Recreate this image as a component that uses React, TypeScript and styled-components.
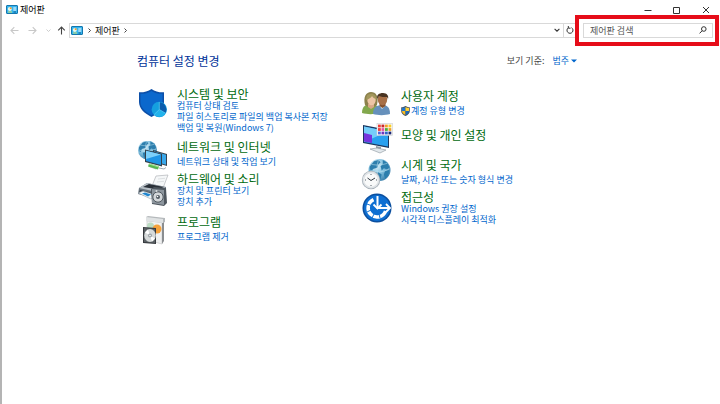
import React from "react";
import styled, { createGlobalStyle } from "styled-components";

const GlobalStyle = createGlobalStyle`
  *, *::before, *::after { box-sizing: border-box; }
  body {
    margin: 0;
    background: #fff;
    font-family: "Noto Sans CJK KR", "Noto Sans", sans-serif;
    font-size: 9px;
    color: #222;
  }
  button, input { font: inherit; color: inherit; }
  a { text-decoration: none; }
  a:hover { text-decoration: underline; }
`;

const Window = styled.div`
  min-height: 100vh;
  padding-top: 1px;
  border-left: 2px solid #b4b4b4;
  background: #fff;
`;

const TitleBar = styled.header`
  display: flex;
  align-items: center;
  height: 17px;
  padding-left: 4px;
`;

const WindowTitle = styled.h1`
  flex: 1;
  margin: 0 0 0 2px;
  font-size: 9px;
  font-weight: 400;
  line-height: 16px;
  color: #000;
`;

const IconButton = styled.button<{ $width: number; $color?: string }>`
  display: flex;
  align-items: center;
  justify-content: center;
  flex: none;
  width: ${(p) => p.$width}px;
  height: 14px;
  padding: 0;
  border: 0;
  background: none;
  color: ${(p) => p.$color ?? "#333"};
`;

const NavBar = styled.nav`
  display: flex;
  align-items: center;
  height: 24px;
  padding-left: 4px;
`;

const AddressBar = styled.div`
  display: flex;
  align-items: center;
  flex: 1;
  height: 15px;
  padding-left: 1px;
  border: 1px solid #d9d9d9;
  border-right: 0;
`;

const Crumb = styled.a`
  line-height: 13px;
  color: #111;
`;

const Spacer = styled.div`
  flex: 1;
`;

const Divider = styled.span`
  width: 1px;
  height: 13px;
  background: #d9d9d9;
`;

const SearchHighlight = styled.div`
  flex: none;
  width: 144px;
  margin: -8px 1px -8px 0;
  padding: 4px 2px 4px 4px;
  border: 4px solid #e60d19;
`;

const SearchBox = styled.form`
  display: flex;
  align-items: center;
  height: 15px;
  border: 1px solid #d9d9d9;
`;

const SearchInput = styled.input`
  flex: 1;
  min-width: 0;
  height: 13px;
  padding: 0 0 0 6px;
  border: 0;
  outline: 0;
  background: none;
  &::placeholder { color: #555; opacity: 1; }
`;

const Main = styled.main`
  padding: 11px 143px 0 135px;
`;

const Heading = styled.div`
  display: flex;
  align-items: center;
  justify-content: space-between;
  height: 16px;
`;

const PageTitle = styled.h2`
  margin: 0;
  font-size: 12px;
  font-weight: 400;
  line-height: 16px;
  color: #003399;
`;

const ViewBy = styled.div`
  display: flex;
  align-items: center;
  gap: 8px;
  line-height: 14px;
  color: #444;
`;

const ViewButton = styled.button`
  display: flex;
  align-items: center;
  gap: 2px;
  padding: 0;
  border: 0;
  background: none;
  color: #0066cc;
  line-height: 14px;
`;

const Columns = styled.div`
  display: grid;
  grid-template-columns: 224px 1fr;
  padding-top: 19px;
`;

const Column = styled.div<{ $rows: string; $top?: number }>`
  display: grid;
  grid-template-rows: ${(p) => p.$rows};
  align-content: start;
  padding-top: ${(p) => p.$top ?? 0}px;
`;

const CategoryRow = styled.section`
  display: grid;
  grid-template-columns: 32px 1fr;
  column-gap: 8px;
  align-items: start;
`;

const CategoryText = styled.div<{ $top: number }>`
  padding-top: ${(p) => p.$top}px;
`;

const CategoryTitle = styled.h3<{ $loose?: boolean }>`
  margin: 0 0 ${(p) => (p.$loose ? 3 : 0)}px;
  font-size: 12px;
  font-weight: 400;
  line-height: 12px;
  white-space: nowrap;
  a { color: #006a0f; }
`;

const TaskList = styled.ul`
  margin: 0;
  padding: 0;
  list-style: none;
`;

const Task = styled.li`
  height: 11px;
  line-height: 11px;
  white-space: nowrap;
`;

const TaskLink = styled.a`
  display: inline-flex;
  align-items: center;
  gap: 1px;
  color: #0066cc;
`;

const Glyph = styled.svg`
  display: block;
  flex: none;
`;

const PanelIcon = () => (
  <Glyph width="12" height="9" viewBox="0 0 12 9" aria-hidden="true">
    <rect x=".5" y=".5" width="11" height="8" rx=".5" fill="#36b4ee" stroke="#1477ae" />
    <circle cx="3.8" cy="4" r="2" fill="#eaf7e8" />
    <path d="M3.8 4V2a2 2 0 0 1 2 2z" fill="#ef9f35" />
    <path d="M7.3 3h3M7.3 5h3" stroke="#fff" />
    <path d="M2 7h4" stroke="#d4e36c" />
    <path d="M7.5 7h2.5" stroke="#0b5b90" />
  </Glyph>
);

const Arrow = ({ turn }: { turn: number }) => (
  <Glyph width="9" height="9" viewBox="0 0 9 9" fill="none" stroke="currentColor" aria-hidden="true">
    <path d="M8.5 4.5H1M4.3 1.2 1 4.5l3.3 3.3" transform={`rotate(${turn} 4.5 4.5)`} strokeWidth="1.1" />
  </Glyph>
);

const Chevron = ({ turn = 0, size = 6 }: { turn?: number; size?: number }) => (
  <Glyph width={size} height={size} viewBox="0 0 6 6" fill="none" stroke="currentColor" aria-hidden="true">
    <path d="M.6 1.8 3 4.2l2.4-2.4" strokeWidth="1.1" transform={`rotate(${turn} 3 3)`} />
  </Glyph>
);

const SecurityIcon = () => (
  <Glyph width="32" height="32" viewBox="0 0 32 32" aria-hidden="true">
    <path d="M14.5 1C11 3.8 6 4.5 2 4.3V14c0 6.5 5.5 11.5 12.5 15C21.5 25.5 27 20.5 27 14V4.3C22.5 4.5 18 3.8 14.5 1z" fill="#0c4fa8" />
    <path d="M14.5 3C11 5.4 7 5.9 3.5 5.8V14c0 5.5 4.8 10 11 13.3C20.7 24 25.5 19.5 25.5 14V5.8C22 5.9 17.5 5.4 14.5 3z" fill="#0b68cd" />
    <circle cx="22.3" cy="21.5" r="7.7" fill="#159fdf" />
    <path d="M22.3 21.5V14.2A7.4 7.4 0 0 1 28.5 25z" fill="#0b5cad" />
    <path d="m22.3 21.5-5.3 5.2a7.5 7.5 0 0 0 11.5-1.2z" fill="#22b3ec" />
    <path d="M22.3 14v7.5l-5.3 5.2M22.3 21.5l6.2 3.7" stroke="#62cff5" strokeWidth=".7" fill="none" />
  </Glyph>
);

const Globe = ({ cx, cy, r, id }: { cx: number; cy: number; r: number; id: string }) => (
  <g>
    <defs>
      <radialGradient id={id} cx=".35" cy=".3" r=".75">
        <stop offset="0" stopColor="#e2f3fa" />
        <stop offset=".5" stopColor="#83c1df" />
        <stop offset="1" stopColor="#3a80ac" />
      </radialGradient>
    </defs>
    <circle cx={cx} cy={cy} r={r} fill={`url(#${id})`} />
    <g transform={`translate(${cx} ${cy}) scale(${r / 10})`}>
      <path d="M-5-8l4-1 2 2-2 2-1 3-4 1-1 3-2-1 0-4zM3-9l4 2.5 2 4-2 2-3-1-2 2-1-4 2-2zM-5 3l4-1 3 2-1 4-3 2-2-3zM5 1l4-1-1 5-3 3-1-4z" fill="#2c7ead" />
      <path d="M-9 0q9 4 18-1M-7-5q7 2 14-1M-1-9q-3 9 1 18" fill="none" stroke="#bfe3f1" strokeWidth=".5" />
    </g>
  </g>
);

const NetworkIcon = () => (
  <Glyph width="32" height="32" viewBox="0 0 32 32" aria-hidden="true">
    <Globe cx={10.5} cy={9} r={9.5} id="globe-network" />
    <path d="m16 9 14 4v12l-14-4z" fill="#37424c" />
    <path d="m17 10.3 12 3.4v10l-12-3.4z" fill="#39a7ea" />
    <path d="m8 8.5 17 4.3v12.7L8 21z" fill="#34414c" />
    <path d="m9 9.8 15 3.8V24L9 20z" fill="#2095e5" />
    <path d="m9 9.8 15 3.8L9 18z" fill="#7dd0fa" />
    <path d="m15 24 7 1.8-3 2.7-7-2.5z" fill="#b9c3c9" />
    <path d="m12 22.5 10 3-1 3-10-3z" fill="#58b751" />
    <path d="m12 23 10 3" stroke="#a5e392" />
    <path d="m22 27 5 1 2-1.5" stroke="#9fabb3" fill="none" />
  </Glyph>
);

const HardwareIcon = () => (
  <Glyph width="32" height="34" viewBox="0 0 32 34" aria-hidden="true">
    <path d="M15 13 19 3l12-1-5 13z" fill="#f5f7f8" stroke="#b1b5b9" strokeWidth=".7" />
    <path d="m20 9 7-.7M21 6l7-.7" stroke="#d5d9dc" strokeWidth=".8" />
    <path d="m2 15 8-5 19 4v8l-9 4L1 21z" fill="#66727d" />
    <path d="m2 15 8-5 19 4-9 5z" fill="#b8c0c7" />
    <path d="m6 14 6-3 15 3-6 2.5z" fill="#2a3038" />
    <path d="m3 17 17 4v4L2 20z" fill="#343c45" />
    <path d="m1 20 5-2 13 4-5 4z" fill="#eef5f8" stroke="#87939d" strokeWidth=".5" />
    <path d="m5 20.5 3-1 6 2-3 2z" fill="#2186cf" />
    <path d="m14 16 3-2 12 1 1 15-3 3-12-2z" fill="#4e565e" />
    <path d="m15 16 12 1v15l-12-2z" fill="#8d969e" />
    <circle cx="21" cy="24" r="5.2" fill="#d2d6d9" stroke="#4d555c" />
    <circle cx="21" cy="24" r="2" fill="#525a62" />
    <circle cx="20.5" cy="23.5" r=".8" fill="#fff" />
    <circle cx="19.5" cy="18" r="1" fill="#d9dde0" />
  </Glyph>
);

const ProgramsIcon = () => (
  <Glyph width="32" height="32" viewBox="-1 0 32 32" aria-hidden="true">
    <path d="m9 2 15 2v24L9 24z" fill="#f0f1f1" stroke="#c3c5c6" strokeWidth=".6" />
    <path d="m24 4 2-1v22l-2 3z" fill="#8a8d90" />
    <path d="m8 1 2-1 17 2v4l-2 1L8 5z" fill="#b5b9bc" />
    <path d="m8 1 17 2v4L8 5z" fill="#e0e3e4" />
    <circle cx="12.5" cy="10" r="3.5" fill="#bcdcc3" />
    <circle cx="19" cy="13" r="4.5" fill="#f4a23c" />
    <path d="m5 11 13 1v16L5 27z" fill="#363a3e" />
    <path d="m6 12 11 1v14L6 26z" fill="#5b6165" />
    <ellipse cx="12" cy="19.5" rx="5.8" ry="6.5" fill="#d6dada" />
    <path d="m12 19.5-5-3 3-3zM12 19.5l5 3-3 3z" fill="#fff" />
    <circle cx="12" cy="19.5" r="2" fill="#9aa1a5" />
    <circle cx="12" cy="19.5" r=".8" fill="#fff" />
  </Glyph>
);

const UsersIcon = () => (
  <Glyph width="32" height="32" viewBox="0 0 32 32" aria-hidden="true">
    <path d="M1 23c0-7 4-9 9-9s8 2 8 9c-5 1.5-12 1.5-17 0z" fill="#82a84d" />
    <path d="M4 15C2 7 5 2 10 2s8 4 6 13l-3 2H7z" fill="#8c814c" />
    <path d="M7 14h6v3l-3 2-3-2z" fill="#d8a786" />
    <ellipse cx="10.500" cy="10" rx="4.2" ry="5.2" fill="#edc5a5" />
    <path d="M5.5 10c3-1 5-3 5.5-4 1 2 3 3 4.5 3C15 4 11 3 9 4 6 4 5 7 5.5 10z" fill="#a3975c" />
    <path d="M12 24c0-7 4-9 9-9s8 2 8 9c-5 1.5-12 1.5-17 0z" fill="#6690bb" />
    <path d="m18 15 3 4 4-4z" fill="#e6eff4" />
    <path d="M18.5 12h6v4l-3 2-3-2z" fill="#85522f" />
    <ellipse cx="21.5" cy="9.500" rx="4.7" ry="5.8" fill="#a87047" />
    <path d="M16.5 9C15 5 18 3 22 3s6 3 5 6l-1-2c-3 0-6 0-8-1z" fill="#493321" />
  </Glyph>
);

const AppearanceIcon = () => {
  const dots = ["#ef3e36", "#c92929", "#f49f28", "#f9cf25", "#ef3e36", "#e4539f", "#4bad38", "#eda02a", "#5364db", "#6e35bd", "#2f65c9", "#1c2874"];
  return (
    <Glyph width="32" height="32" viewBox="0 0 32 32" aria-hidden="true">
      <path d="m2 2 26 5v18L2 20z" fill="#1b365e" />
      <path d="m3 3.5 24 5v15L3 19z" fill="#29a0ef" />
      <path d="m3 3.5 24 5L3 19z" fill="#74cdfa" />
      <path d="m3 10 8 2v8l-8-1.5z" fill="#7634dd" />
      <path d="m15 23 5 1v4l-5-1z" fill="#929ea8" />
      <path d="m9 26 7-1 9 2-6 3z" fill="#e2e8ec" stroke="#89949c" strokeWidth=".6" />
      <rect x="16" y=".3" width="15.5" height="12" fill="#fafafa" stroke="#cbcfd3" strokeWidth=".6" />
      {dots.map((color, i) => (
        <rect key={i} x={17 + (i % 4) * 3.5} y={1.6 + Math.floor(i / 4) * 3.5} width="2.8" height="2.8" fill={color} />
      ))}
    </Glyph>
  );
};

const ClockIcon = () => (
  <Glyph width="32" height="32" viewBox="0 0 32 32" aria-hidden="true">
    <Globe cx={18.5} cy={12} r={11} id="globe-clock" />
    <circle cx="10" cy="22" r="9.2" fill="#a9b2ba" />
    <circle cx="10" cy="22" r="8.4" fill="#dfe3e6" />
    <circle cx="10" cy="22" r="6.8" fill="#f9fafa" />
    <path d="M10 16v1M10 27v1M4 22h1M15 22h1" stroke="#59636d" />
    <path d="m6.500 20 3.500 2.500 4-2.500" fill="none" stroke="#333b43" />
  </Glyph>
);

const AccessIcon = () => (
  <Glyph width="32" height="32" viewBox="0 0 32 32" aria-hidden="true">
    <circle cx="16" cy="17" r="14.5" fill="#0b4f9f" />
    <circle cx="16" cy="17" r="13" fill="#0e6fd2" />
    <path d="M12.500 8.700A9 9 0 1 0 24.600 20" fill="none" stroke="#fff" strokeWidth="3.600" />
    <path d="m6 13 4 1.500M6 21l4-2M11 27l2-4M19 27l-1-4" stroke="#0e6fd2" />
    <path d="M16.500 5v12H28" fill="none" stroke="#fff" strokeWidth="2" />
    <path d="m12.500 13.500 4 4 4-4M25 13l4 4-4 4" fill="none" stroke="#fff" strokeWidth="1.800" />
  </Glyph>
);

const ShieldIcon = () => (
  <Glyph width="9" height="10" viewBox="0 0 9 10" aria-hidden="true">
    <path d="M4.5 0C3 1 1.5 1.3.2 1.3V5c0 2.5 2 4 4.3 5 2.3-1 4.3-2.5 4.3-5V1.3C7.5 1.3 6 1 4.5 0z" fill="#46525f" />
    <path d="M4.5 1v4H1V2q2-.1 3.5-1z" fill="#1c77d1" />
    <path d="M4.5 1v4H8V2q-2-.1-3.5-1z" fill="#ffd132" />
    <path d="M1 5h3.5v4Q1 7.5 1 5z" fill="#fbbd20" />
    <path d="M8 5H4.5v4Q8 7.5 8 5z" fill="#1c69bd" />
  </Glyph>
);

type Category = {
  title: string;
  icon: React.ReactNode;
  tasks: string[];
  loose?: boolean;
  top?: number;
  shielded?: boolean;
};

const leftCategories: Category[] = [
  { title: "시스템 및 보안", icon: <SecurityIcon />, tasks: ["컴퓨터 상태 검토", "파일 히스토리로 파일의 백업 복사본 저장", "백업 및 복원(Windows 7)"] },
  { title: "네트워크 및 인터넷", icon: <NetworkIcon />, tasks: ["네트워크 상태 및 작업 보기"], loose: true },
  { title: "하드웨어 및 소리", icon: <HardwareIcon />, tasks: ["장치 및 프린터 보기", "장치 추가"] },
  { title: "프로그램", icon: <ProgramsIcon />, tasks: ["프로그램 제거"], loose: true },
];

const rightCategories: Category[] = [
  { title: "사용자 계정", icon: <UsersIcon />, tasks: ["계정 유형 변경"], loose: true, shielded: true },
  { title: "모양 및 개인 설정", icon: <AppearanceIcon />, tasks: [], top: 6 },
  { title: "시계 및 국가", icon: <ClockIcon />, tasks: ["날짜, 시간 또는 숫자 형식 변경"], loose: true, top: 1 },
  { title: "접근성", icon: <AccessIcon />, tasks: ["Windows 권장 설정", "시각적 디스플레이 최적화"] },
];

const CategoryItem = ({ title, icon, tasks, loose, top = 0, shielded }: Category) => (
  <CategoryRow>
    {icon}
    <CategoryText $top={top}>
      <CategoryTitle $loose={loose}><a href="#">{title}</a></CategoryTitle>
      {tasks.length > 0 && (
        <TaskList>
          {tasks.map((task) => (
            <Task key={task}>
              <TaskLink href="#">{shielded && <ShieldIcon />}{task}</TaskLink>
            </Task>
          ))}
        </TaskList>
      )}
    </CategoryText>
  </CategoryRow>
);

export default function App() {
  return (
    <>
      <GlobalStyle />
      <Window>
        <TitleBar>
          <PanelIcon />
          <WindowTitle>제어판</WindowTitle>
          <IconButton $width={29} aria-label="최소화">
            <Glyph width="8" height="8" viewBox="0 0 8 8"><path d="M.5 4.5h7" stroke="currentColor" /></Glyph>
          </IconButton>
          <IconButton $width={29} aria-label="최대화">
            <Glyph width="8" height="8" viewBox="0 0 8 8"><path d="M.5 1.5h6v6h-6z" fill="none" stroke="currentColor" /></Glyph>
          </IconButton>
          <IconButton $width={29} aria-label="닫기">
            <Glyph width="8" height="8" viewBox="0 0 8 8"><path d="m1 1 6 6M7 1 1 7" stroke="currentColor" /></Glyph>
          </IconButton>
        </TitleBar>
        <NavBar>
          <IconButton $width={16} $color="#c8c8c8" aria-label="뒤로"><Arrow turn={0} /></IconButton>
          <IconButton $width={21} $color="#c8c8c8" aria-label="앞으로"><Arrow turn={180} /></IconButton>
          <IconButton $width={10} $color="#c8c8c8" aria-label="최근 위치"><Chevron size={5} /></IconButton>
          <IconButton $width={16} $color="#444" aria-label="위로"><Arrow turn={90} /></IconButton>
          <AddressBar>
            <PanelIcon />
            <IconButton $width={12} aria-label="위치 목록"><Chevron turn={-90} size={5} /></IconButton>
            <Crumb href="#">제어판</Crumb>
            <IconButton $width={12} aria-label="하위 항목"><Chevron turn={-90} size={5} /></IconButton>
            <Spacer />
            <IconButton $width={12} aria-label="이전 위치"><Chevron /></IconButton>
            <Divider />
            <IconButton $width={11} aria-label="새로 고침">
              <Glyph width="8" height="8" viewBox="0 0 8 8" fill="none" stroke="currentColor">
                <path d="M5.5 1.7A3 3 0 1 1 2.3 1.8M2.3 0v2.2H4.5" />
              </Glyph>
            </IconButton>
          </AddressBar>
          <SearchHighlight>
            <SearchBox role="search">
              <SearchInput type="text" aria-label="제어판 검색" placeholder="제어판 검색" />
              <IconButton $width={18} type="button" aria-label="검색">
                <Glyph width="8" height="8" viewBox="0 0 8 8" fill="none" stroke="currentColor">
                  <circle cx="4.8" cy="3" r="2.3" /><path d="M3.2 4.7.6 7.4" />
                </Glyph>
              </IconButton>
            </SearchBox>
          </SearchHighlight>
        </NavBar>
        <Main>
          <Heading>
            <PageTitle>컴퓨터 설정 변경</PageTitle>
            <ViewBy>
              <span id="view-by">보기 기준:</span>
              <ViewButton aria-describedby="view-by">
                범주
                <Glyph width="6" height="4" viewBox="0 0 6 4" aria-hidden="true"><path d="M0 .5h6L3 3.5z" fill="currentColor" /></Glyph>
              </ViewButton>
            </ViewBy>
          </Heading>
          <Columns>
            <Column $rows="53px 32px 43px auto">
              {leftCategories.map((c) => <CategoryItem key={c.title} {...c} />)}
            </Column>
            <Column $rows="33px 35px 33px auto" $top={2}>
              {rightCategories.map((c) => <CategoryItem key={c.title} {...c} />)}
            </Column>
          </Columns>
        </Main>
      </Window>
    </>
  );
}
